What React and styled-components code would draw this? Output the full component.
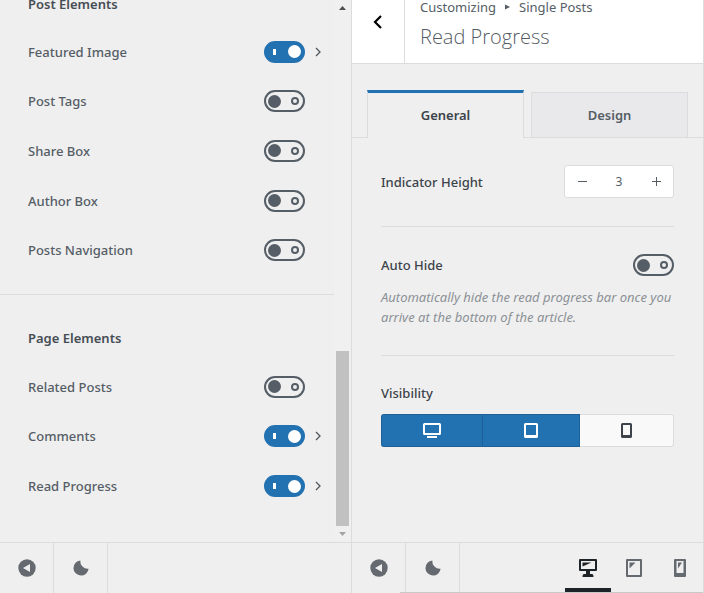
import React, { useState } from "react";
import styled, { createGlobalStyle, css } from "styled-components";

const colors = {
  bg: "#efefef",
  line: "#dcdcde",
  blue: "#2271b1",
  darkBlue: "#1e6198",
  slate: "#555d66",
  text: "#3c434a",
};

const GlobalStyle = createGlobalStyle`
  *, *::before, *::after {
    box-sizing: border-box;
  }
  body {
    margin: 0;
    background: ${colors.bg};
    color: ${colors.slate};
    font-family: "Noto Sans", "Open Sans", sans-serif;
    font-size: 13px;
    line-height: 20px;
  }
  button, input {
    font: inherit;
    color: inherit;
    margin: 0;
  }
  button {
    padding: 0;
    border: 0;
    background: none;
    cursor: pointer;
  }
  h1, h2, p, ul {
    margin: 0;
    padding: 0;
  }
  svg {
    display: block;
  }
`;

const Page = styled.div`
  display: grid;
  grid-template-columns: 1fr 1fr;
  height: 100vh;
`;

const Panel = styled.section`
  display: flex;
  flex-direction: column;
  min-width: 0;
  min-height: 0;
  border-right: 1px solid ${colors.line};
`;

/* left panel */

const ScrollArea = styled.div`
  flex: 1;
  display: flex;
  min-height: 0;
  overflow: hidden;
`;

const ScrollContent = styled.div`
  flex: 1;
  display: flex;
  flex-direction: column;
  justify-content: flex-end;
  padding-bottom: 31px;
`;

const Heading = styled.h2`
  flex: none;
  padding-left: 28px;
  font-size: 13px;
  font-weight: 600;
  color: #464d54;
`;

const Options = styled.ul`
  flex: none;
  display: grid;
  grid-auto-rows: 1fr;
  min-height: ${(props) => (props.$tall ? 248 : 149)}px;
  margin-top: ${(props) => (props.$tall ? 13 : 14)}px;
  list-style: none;
`;

const Option = styled.li`
  display: flex;
  align-items: center;
  padding: 0 13px 0 28px;
`;

const OptionLabel = styled.label`
  flex: 1;
  font-weight: 500;
`;

const More = styled.button`
  width: 6px;
  margin-left: 10px;
`;

const Divider = styled.hr`
  flex: none;
  width: 100%;
  height: 1px;
  margin: ${(props) => props.$margin};
  border: 0;
  background: ${colors.line};
`;

const Toggle = styled.input`
  appearance: none;
  flex: none;
  display: flex;
  align-items: center;
  justify-content: space-between;
  width: 41px;
  height: 22px;
  padding: 0 4px 0 2px;
  border: 2px solid ${colors.slate};
  border-radius: 11px;

  &::before {
    content: "";
    width: 13px;
    height: 13px;
    border-radius: 50%;
    background: ${colors.slate};
  }
  &::after {
    content: "";
    width: 8px;
    height: 8px;
    border: 2px solid ${colors.slate};
    border-radius: 50%;
  }
  &:checked {
    padding: 0 2px 0 7px;
    border-color: ${colors.blue};
    background: ${colors.blue};
  }
  &:checked::before {
    width: 3px;
    height: 6px;
    border-radius: 0;
    background: #fff;
  }
  &:checked::after {
    width: 13px;
    height: 13px;
    border: 0;
    background: #fff;
  }
`;

const Scrollbar = styled.div`
  display: flex;
  flex-direction: column;
  width: 17px;
  padding: 0 2px;
  background: #f0f0f0;
`;

const ScrollArrow = styled.span`
  flex: none;
  display: grid;
  place-items: center;
  height: 16px;
`;

const Track = styled.div`
  flex: 21;
`;

const Thumb = styled.div`
  flex: 11;
  background: #c1c1c1;
`;

/* right panel */

const Header = styled.header`
  display: flex;
  height: 64px;
  border-bottom: 1px solid ${colors.line};
  background: #fff;
`;

const Back = styled.button`
  display: flex;
  justify-content: center;
  width: 53px;
  padding-top: 15px;
  border-right: 1px solid ${colors.line};
`;

const Titles = styled.div`
  flex: 1;
  display: flex;
  flex-direction: column;
  justify-content: flex-end;
  padding: 0 15px 12px;
`;

const Crumbs = styled.p`
  display: flex;
  align-items: center;
  gap: 9px;
`;

const Title = styled.h1`
  font-family: "Open Sans", sans-serif;
  font-size: 20px;
  font-weight: 300;
  line-height: 28px;
  margin-top: 6px;
`;

const Tabs = styled.div`
  display: flex;
  align-items: flex-end;
  gap: 7px;
  margin-top: 26px;
  padding: 0 15px;
  box-shadow: inset 0 -1px ${colors.line};
`;

const Tab = styled.button`
  flex: 1;
  height: 46px;
  border: 1px solid ${colors.line};
  background: #e9e9eb;
  font-weight: 600;

  ${(props) =>
    props.$active &&
    css`
      height: 48px;
      padding-bottom: 2px;
      border-top: 3px solid ${colors.blue};
      border-bottom: 0;
      background: ${colors.bg};
      color: ${colors.text};
    `}
`;

const Settings = styled.div`
  flex: 1;
  min-height: 0;
  padding: 27px 29px 0;
`;

const Field = styled.div`
  display: flex;
  align-items: center;
  justify-content: space-between;
`;

const FieldLabel = styled.label`
  font-weight: 500;
  color: ${colors.text};
`;

const Stepper = styled.div`
  display: flex;
  align-items: center;
  width: 110px;
  height: 33px;
  border: 1px solid ${colors.line};
  border-radius: 3px;
  background: #fff;
`;

const StepButton = styled.button`
  display: grid;
  place-items: center;
  width: 34px;
  height: 100%;
`;

const StepInput = styled.input`
  flex: 1;
  min-width: 0;
  padding: 0;
  border: 0;
  background: none;
  font-size: 12px;
  text-align: center;
`;

const Description = styled.p`
  margin-top: 11px;
  color: #8c9196;
  font-style: italic;
`;

const Devices = styled.div`
  display: flex;
  height: 33px;
  margin-top: 11px;
`;

const Device = styled.button`
  flex: 1 1 auto;
  display: flex;
  align-items: center;
  justify-content: center;
  border: 1px solid ${(props) => (props.$on ? colors.darkBlue : colors.line)};
  border-right-width: ${(props) => (props.$joined ? 0 : 1)}px;
  border-left-width: ${(props) => (props.$on ? 1 : 0)}px;
  background: ${(props) => (props.$on ? colors.blue : "#f9f9f9")};
  color: ${(props) => (props.$on ? "#fff" : "#3c434a")};

  &:first-child {
    border-radius: 3px 0 0 3px;
  }
  &:last-child {
    border-radius: 0 3px 3px 0;
  }
`;

/* footer */

const Footer = styled.footer`
  flex: none;
  display: flex;
  position: relative;
  height: 51px;
  border-top: 1px solid ${colors.line};
`;

/* hairline over the bottom edge of the footer */
const FooterEdge = styled.span`
  position: absolute;
  right: 0;
  bottom: 0;
  left: 48px;
  height: 1px;
  background: #c8c8c8;
`;

const FooterButton = styled.button`
  display: grid;
  place-items: center;
  width: 54px;
  border-right: 1px solid ${colors.line};
  color: #656a70;
`;

const Previews = styled.div`
  display: flex;
  margin-left: auto;
`;

const Preview = styled.button`
  display: grid;
  place-items: center;
  width: 46px;
  border-top: 5px solid transparent;
  border-bottom: 5px solid ${(props) => (props.$active ? "#1d2327" : "transparent")};
  color: ${(props) => (props.$active ? "#1d2327" : "#656a70")};
`;

const ChevronIcon = () => (
  <svg width="6" height="10" viewBox="0 0 6 10" fill="none" stroke="#50575e" strokeWidth="1.3">
    <path d="M1 1l4 4-4 4" />
  </svg>
);

const BackIcon = () => (
  <svg width="10" height="14" viewBox="0 0 10 14" fill="none" stroke="#000" strokeWidth="2.2">
    <path d="M8 1L2 7l6 6" />
  </svg>
);

const ArrowIcon = ({ down }) => (
  <svg width="7" height="4" viewBox="0 0 7 4" fill={down ? "#a3a3a3" : "#505050"}>
    <path d={down ? "M0 0h7L3.5 4z" : "M0 4h7L3.5 0z"} />
  </svg>
);

const CollapseIcon = () => (
  <svg width="18" height="18" viewBox="0 0 18 18">
    <circle cx="9" cy="9" r="8.7" fill="currentColor" />
    <path d="M12 5v8L5 9z" fill={colors.bg} />
  </svg>
);

const MoonIcon = () => (
  <svg width="16" height="16" viewBox="0 0 16 16" fill="currentColor">
    <path d="M7.3.4A7.6 7.6 0 1 0 15.6 8.7 7.5 7.5 0 0 1 7.3.4z" />
  </svg>
);

const deviceIcons = {
  desktop: (
    <svg width="18" height="15" viewBox="0 0 18 15" fill="currentColor" fillRule="evenodd">
      <path d="M1.5 0h15A1.5 1.5 0 0 1 18 1.5v9a1.5 1.5 0 0 1-1.5 1.5h-15A1.5 1.5 0 0 1 0 10.5v-9A1.5 1.5 0 0 1 1.5 0zM2 2v8h14V2zM4 13h10v2H4z" />
    </svg>
  ),
  tablet: (
    <svg width="14" height="15" viewBox="0 0 14 15" fill="currentColor" fillRule="evenodd">
      <path d="M1.5 0h11A1.5 1.5 0 0 1 14 1.5v12a1.5 1.5 0 0 1-1.5 1.5h-11A1.5 1.5 0 0 1 0 13.5v-12A1.5 1.5 0 0 1 1.5 0zM2 2v10h10V2z" />
    </svg>
  ),
  mobile: (
    <svg width="11" height="15" viewBox="0 0 11 15" fill="currentColor" fillRule="evenodd">
      <path d="M1.5 0h8A1.5 1.5 0 0 1 11 1.5v12A1.5 1.5 0 0 1 9.5 15h-8A1.5 1.5 0 0 1 0 13.5v-12A1.5 1.5 0 0 1 1.5 0zM2 2v10h7V2z" />
    </svg>
  ),
};

const previewIcons = {
  desktop: (
    <svg width="18" height="18" viewBox="0 0 18 18" fill="currentColor" fillRule="evenodd">
      <path d="M1 0h16a1 1 0 0 1 1 1v10a1 1 0 0 1-1 1h-6v3h2q1.5 0 1.5 3h-11q0-3 1.5-3h2v-3H1a1 1 0 0 1-1-1V1a1 1 0 0 1 1-1zM2 2v8h14V2z" />
      <path d="M3.5 3.5h9l-9 4z" />
    </svg>
  ),
  tablet: (
    <svg width="16" height="18" viewBox="0 0 16 18" fill="currentColor" fillRule="evenodd">
      <path d="M1 0h14a1 1 0 0 1 1 1v16a1 1 0 0 1-1 1H1a1 1 0 0 1-1-1V1a1 1 0 0 1 1-1zM2 2v14h12V2z" />
      <path d="M3.5 3.5h6l-6 6z" />
    </svg>
  ),
  mobile: (
    <svg width="12" height="18" viewBox="0 0 12 18" fill="currentColor" fillRule="evenodd">
      <path d="M1 0h10a1 1 0 0 1 1 1v16a1 1 0 0 1-1 1H1a1 1 0 0 1-1-1V1a1 1 0 0 1 1-1zM2.5 2v12h7V2z" />
      <path d="M4 3.5h4l-4 6z" />
    </svg>
  ),
};

const postElements = [
  { id: "featured", label: "Featured Image", on: true },
  { id: "tags", label: "Post Tags" },
  { id: "share", label: "Share Box" },
  { id: "author", label: "Author Box" },
  { id: "nav", label: "Posts Navigation" },
];

const pageElements = [
  { id: "related", label: "Related Posts" },
  { id: "comments", label: "Comments", on: true },
  { id: "progress", label: "Read Progress", on: true },
];

const OptionRow = ({ id, label, on }) => {
  const [checked, setChecked] = useState(!!on);
  return (
    <Option>
      <OptionLabel htmlFor={id}>{label}</OptionLabel>
      <Toggle id={id} type="checkbox" checked={checked} onChange={() => setChecked(!checked)} />
      <More aria-label={`${label} options`} disabled={!checked}>
        {checked && <ChevronIcon />}
      </More>
    </Option>
  );
};

const FooterButtons = () => (
  <>
    <FooterButton aria-label="Hide controls">
      <CollapseIcon />
    </FooterButton>
    <FooterButton aria-label="Dark mode">
      <MoonIcon />
    </FooterButton>
  </>
);

const ElementsPanel = () => (
  <Panel>
    <ScrollArea>
      <ScrollContent>
        <Heading>Post Elements</Heading>
        <Options $tall>
          {postElements.map((item) => (
            <OptionRow key={item.id} {...item} />
          ))}
        </Options>
        <Divider $margin="19px 0 33px" />
        <Heading>Page Elements</Heading>
        <Options>
          {pageElements.map((item) => (
            <OptionRow key={item.id} {...item} />
          ))}
        </Options>
      </ScrollContent>
      <Scrollbar aria-hidden="true">
        <ScrollArrow>
          <ArrowIcon />
        </ScrollArrow>
        <Track />
        <Thumb />
        <ScrollArrow>
          <ArrowIcon down />
        </ScrollArrow>
      </Scrollbar>
    </ScrollArea>
    <Footer>
      <FooterButtons />
    </Footer>
  </Panel>
);

const ProgressPanel = () => {
  const [tab, setTab] = useState("General");
  const [height, setHeight] = useState(3);
  const [autoHide, setAutoHide] = useState(false);
  const [visible, setVisible] = useState({ desktop: true, tablet: true, mobile: false });
  const [preview, setPreview] = useState("desktop");

  return (
    <Panel>
      <Header>
        <Back aria-label="Back">
          <BackIcon />
        </Back>
        <Titles>
          <Crumbs>
            Customizing
            <svg width="5" height="6" viewBox="0 0 5 6" fill={colors.slate}>
              <path d="M0 .5L5 3 0 5.5z" />
            </svg>
            Single Posts
          </Crumbs>
          <Title>Read Progress</Title>
        </Titles>
      </Header>
      <Tabs role="tablist">
        {["General", "Design"].map((name) => (
          <Tab key={name} role="tab" aria-selected={tab === name} $active={tab === name} onClick={() => setTab(name)}>
            {name}
          </Tab>
        ))}
      </Tabs>
      <Settings>
        <Field>
          <FieldLabel htmlFor="height">Indicator Height</FieldLabel>
          <Stepper>
            <StepButton aria-label="Decrease" onClick={() => setHeight(height - 1)}>
              <svg width="9" height="9" viewBox="0 0 9 9" fill={colors.slate}>
                <path d="M0 4h9v1H0z" />
              </svg>
            </StepButton>
            <StepInput id="height" value={height} onChange={(e) => setHeight(Number(e.target.value) || 0)} />
            <StepButton aria-label="Increase" onClick={() => setHeight(height + 1)}>
              <svg width="9" height="9" viewBox="0 0 9 9" fill={colors.slate}>
                <path d="M0 4h9v1H0zM4 0h1v9H4z" />
              </svg>
            </StepButton>
          </Stepper>
        </Field>
        <Divider $margin="28px 0 27px" />
        <Field>
          <FieldLabel htmlFor="autohide">Auto Hide</FieldLabel>
          <Toggle id="autohide" type="checkbox" checked={autoHide} onChange={() => setAutoHide(!autoHide)} />
        </Field>
        <Description>Automatically hide the read progress bar once you arrive at the bottom of the article.</Description>
        <Divider $margin="28px 0 27px" />
        <FieldLabel as="div" id="visibility">Visibility</FieldLabel>
        <Devices role="group" aria-labelledby="visibility">
          {Object.keys(deviceIcons).map((name) => (
            <Device
              key={name}
              aria-label={name}
              aria-pressed={visible[name]}
              $on={visible[name]}
              $joined={name === "desktop" && visible.tablet}
              onClick={() => setVisible({ ...visible, [name]: !visible[name] })}
            >
              {deviceIcons[name]}
            </Device>
          ))}
        </Devices>
      </Settings>
      <Footer>
        <FooterButtons />
        <Previews>
          {Object.keys(previewIcons).map((name) => (
            <Preview key={name} aria-label={`Preview on ${name}`} $active={preview === name} onClick={() => setPreview(name)}>
              {previewIcons[name]}
            </Preview>
          ))}
        </Previews>
        <FooterEdge />
      </Footer>
    </Panel>
  );
};

const App = () => (
  <>
    <GlobalStyle />
    <Page>
      <ElementsPanel />
      <ProgressPanel />
    </Page>
  </>
);

export default App;
